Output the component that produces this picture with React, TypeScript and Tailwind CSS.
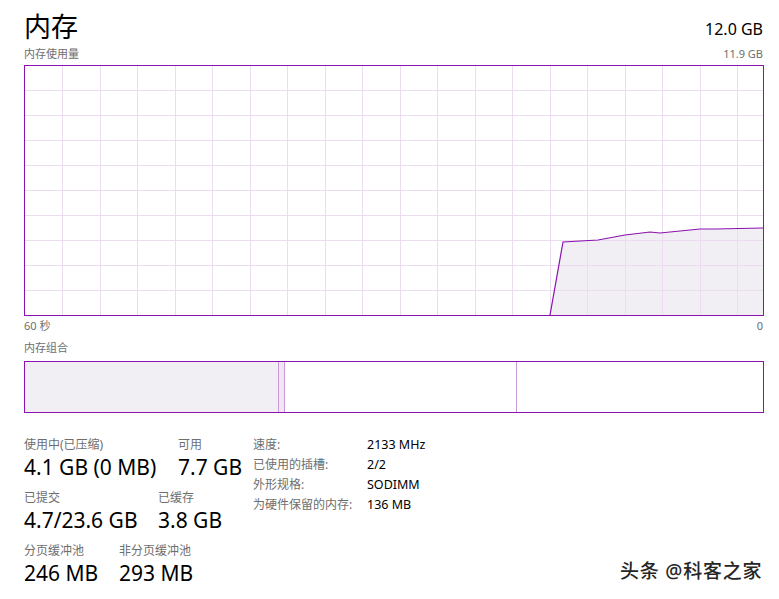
import React from "react";

const FONT = '"Noto Sans", "Noto Sans CJK SC", sans-serif';

function UsageGraph() {
  const vx: number[] = [];
  for (let k = 0; k <= 18; k++) vx.push(Math.round(37 + 37.5 * k) + 0.5);
  const hy: number[] = [];
  for (let k = 0; k <= 8; k++) hy.push(24 + 25 * k + 0.5);
  const pts: [number, number][] = [
    [525, 249],
    [538, 176],
    [573, 174],
    [600, 169],
    [625, 166],
    [635, 167],
    [675, 163],
    [690, 163],
    [738, 162],
  ];
  const line = pts.map((p) => p.join(",")).join(" ");
  const area = line + " 738,249 525,249";
  return (
    <svg width={738} height={249} className="block">
      <polygon points={area} fill="#f1eff4" />
      {vx.map((x) => (
        <line key={"v" + x} x1={x} y1={0} x2={x} y2={249} stroke="#ecdcf0" strokeWidth={1} />
      ))}
      {hy.map((y) => (
        <line key={"h" + y} x1={0} y1={y} x2={738} y2={y} stroke="#ecdcf0" strokeWidth={1} />
      ))}
      <polyline points={line} fill="none" stroke="#8b12ae" strokeWidth={1.2} />
    </svg>
  );
}

function Stat({ label, value, w }: { label: string; value: string; w?: string }) {
  return (
    <div className={"flex flex-col " + (w ?? "")}>
      <div className="text-[12px] leading-[16px] text-[#6e6e6e]">{label}</div>
      <div className="text-[21px] leading-[26px] text-black mt-[1px]">{value}</div>
    </div>
  );
}

export default function App() {
  return (
    <div
      className="relative w-[779px] h-[599px] bg-white overflow-hidden pl-[24px] pr-[16px]"
      style={{ fontFamily: FONT }}
    >
      <div className="flex justify-between items-end h-[44px]">
        <div className="text-[27px] leading-[34px] text-black">内存</div>
        <div className="text-[16px] leading-[20px] text-black mb-[5px]">12.0 GB</div>
      </div>
      <div className="flex justify-between items-center h-[20px] text-[11px] text-[#6e6e6e]">
        <span>内存使用量</span>
        <span>11.9 GB</span>
      </div>
      <div className="mt-[1px] w-[740px] h-[251px] border border-[#8b12ae]">
        <UsageGraph />
      </div>
      <div className="flex justify-between items-center h-[20px] text-[11px] text-[#6e6e6e]">
        <span>60 秒</span>
        <span>0</span>
      </div>
      <div className="flex items-center h-[24px] text-[11px] text-[#6e6e6e]">内存组合</div>
      <div className="mt-[1px] w-[740px] h-[52px] border border-[#8b12ae] flex">
        <div className="w-[253px] h-full bg-[#f2eff4]" />
        <div className="w-[6px] h-full bg-[#efe7f3] border-l border-[#c99ad7]" />
        <div className="w-[232px] h-full bg-white border-l border-[#c99ad7]" />
        <div className="flex-1 h-full bg-white border-l border-[#c99ad7]" />
      </div>

      <div className="mt-[24px] flex items-start">
        <div className="flex flex-col gap-[10px] w-[229px]">
          <div className="flex">
            <Stat label="使用中(已压缩)" value="4.1 GB (0 MB)" w="w-[154px]" />
            <Stat label="可用" value="7.7 GB" />
          </div>
          <div className="flex">
            <Stat label="已提交" value="4.7/23.6 GB" w="w-[134px]" />
            <Stat label="已缓存" value="3.8 GB" />
          </div>
          <div className="flex">
            <Stat label="分页缓冲池" value="246 MB" w="w-[95px]" />
            <Stat label="非分页缓冲池" value="293 MB" />
          </div>
        </div>
        <div className="flex flex-col -mt-[2px] leading-[20px]">
          {[
            ["速度:", "2133 MHz"],
            ["已使用的插槽:", "2/2"],
            ["外形规格:", "SODIMM"],
            ["为硬件保留的内存:", "136 MB"],
          ].map(([k, v]) => (
            <div key={k} className="flex h-[20px] items-center">
              <span className="w-[114px] text-[12px] text-[#6e6e6e]">{k}</span>
              <span className="text-[12.5px] text-black">{v}</span>
            </div>
          ))}
        </div>
      </div>

      <div
        className="absolute left-[620px] top-[558px] text-[19px] leading-[26px] font-medium tracking-[0.8px] text-[#262626] whitespace-nowrap"
        style={{ textShadow: "1px 1px 1px #ffffff, -1px -1px 1px #ffffff" }}
      >
        头条 @科客之家
      </div>
    </div>
  );
}
